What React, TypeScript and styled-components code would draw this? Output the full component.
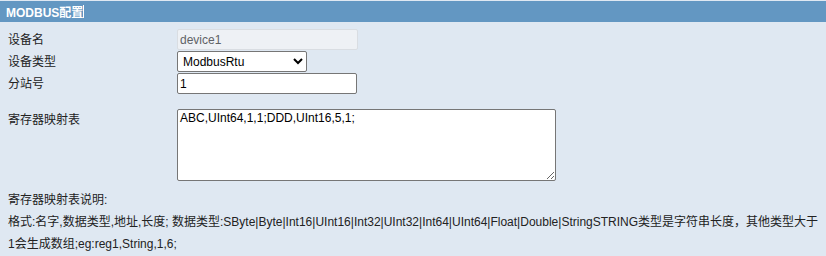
import React from 'react';
import styled, { createGlobalStyle } from 'styled-components';

const GlobalStyle = createGlobalStyle`
    html, body {
        margin: 0;
        padding: 0;
        background: #dfe8f2;
    }
    body {
        font-family: "Liberation Sans", Arial, "Noto Sans CJK SC", sans-serif;
        font-size: 12px;
        color: #222;
    }
`;

export default function App() {
    return (
        <Base>
            <GlobalStyle />
            <Header>
                <Title>MODBUS配置</Title>
                <Caret />
            </Header>

            <Form>
                <Label>设备名</Label>
                <Field>
                    <TextInput disabled defaultValue='device1' width={181} />
                </Field>

                <Label>设备类型</Label>
                <Field>
                    <Select defaultValue='ModbusRtu'>
                        <option value='ModbusRtu'>ModbusRtu</option>
                        <option value='ModbusTcp'>ModbusTcp</option>
                    </Select>
                </Field>

                <Label>分站号</Label>
                <Field>
                    <TextInput defaultValue='1' width={180} />
                </Field>

                <Label $top>寄存器映射表</Label>
                <Field $spaced>
                    <TextArea defaultValue='ABC,UInt64,1,1;DDD,UInt16,5,1;' />
                </Field>
            </Form>

            <Notes>
                <Note>寄存器映射表说明:</Note>
                <Note>
                    格式:名字,数据类型,地址,长度; 数据类型:SByte|Byte|Int16|UInt16|Int32|UInt32|Int64|UInt64|Float|Double|StringSTRING类型是字符串长度，其他类型大于1会生成数组;eg:reg1,String,1,6;
                </Note>
            </Notes>
        </Base>
    );
}

const Base = styled.div`
    width: 826px;
    height: 256px;
    padding-top: 1px;
    box-sizing: border-box;
    overflow: hidden;
`;

const Header = styled.div`
    height: 21px;
    background: #6397c2;
    display: flex;
    align-items: center;
    padding-left: 6px;
`;

const Title = styled.span`
    color: #fff;
    font-weight: bold;
    font-size: 12px;
`;

const Caret = styled.span`
    display: inline-block;
    width: 1px;
    height: 13px;
    background: #fff;
`;

const Form = styled.div`
    display: grid;
    grid-template-columns: 177px 1fr;
    padding-top: 7px;
    row-gap: 1px;
`;

const Label = styled.div<{ $top?: boolean }>`
    padding-left: 8px;
    display: flex;
    align-items: ${p => (p.$top ? 'flex-start' : 'center')};
    padding-top: ${p => (p.$top ? '18px' : '0')};
    line-height: 14px;
`;

const Field = styled.div<{ $spaced?: boolean }>`
    display: flex;
    align-items: center;
    padding-top: ${p => (p.$spaced ? '14px' : '0')};
`;

const TextInput = styled.input<{ width: number }>`
    box-sizing: border-box;
    width: ${p => p.width}px;
    height: 21px;
    margin: 0;
    padding: 0 2px;
    font-family: "Liberation Sans", Arial, sans-serif;
    font-size: 12px;
    color: #000;
    background: #fff;
    border: 1px solid #767676;
    border-radius: 2px;
    outline: none;

    &:disabled {
        background: #eef1f5;
        border-color: #d9dde2;
        color: #5f6266;
    }
`;

const Select = styled.select`
    box-sizing: border-box;
    width: 130px;
    height: 21px;
    margin: 0;
    padding: 0 0 0 1px;
    font-family: "Liberation Sans", Arial, sans-serif;
    font-size: 12px;
    color: #000;
    background: #fff;
    border: 1px solid #767676;
    border-radius: 2px;
`;

const TextArea = styled.textarea`
    box-sizing: border-box;
    width: 379px;
    height: 72px;
    margin: 0;
    padding: 1px 2px;
    font-family: "Liberation Sans", Arial, sans-serif;
    font-size: 12px;
    color: #000;
    background: #fff;
    border: 1px solid #767676;
    border-radius: 2px;
    resize: both;
`;

const Notes = styled.div`
    padding: 8px 8px 0 8px;
    line-height: 22px;
`;

const Note = styled.div`
    width: 812px;
`;
